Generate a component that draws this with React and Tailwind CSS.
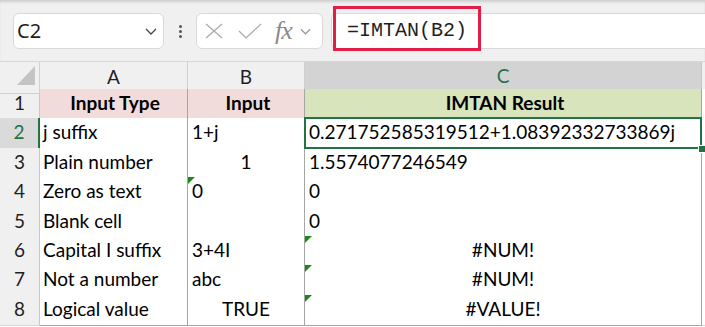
const COLS = 'grid grid-cols-[40px_148px_117px_397px_3px]';

const rows = [
  { n: 1, h: 'h-[29px]', a: 'Input Type', b: 'Input', c: 'IMTAN Result', head: true },
  { n: 2, h: 'h-[30px]', a: 'j suffix', b: '1+j', c: '0.271752585319512+1.08392332733869j', sel: true },
  { n: 3, h: 'h-[29px]', a: 'Plain number', b: '1', bCenter: true, c: '1.5574077246549' },
  { n: 4, h: 'h-[30px]', a: 'Zero as text', b: '0', bFlag: true, c: '0' },
  { n: 5, h: 'h-[29px]', a: 'Blank cell', b: '', c: '0' },
  { n: 6, h: 'h-[29px]', a: 'Capital I suffix', b: '3+4I', c: '#NUM!', cCenter: true, cFlag: true },
  { n: 7, h: 'h-[30px]', a: 'Not a number', b: 'abc', c: '#NUM!', cCenter: true, cFlag: true },
  { n: 8, h: 'h-[29px]', a: 'Logical value', b: 'TRUE', bCenter: true, c: '#VALUE!', cCenter: true, cFlag: true },
];

function Flag() {
  return (
    <span className="absolute left-0 top-0 w-0 h-0 border-t-[7px] border-r-[7px] border-t-[#1b8a1b] border-r-transparent" />
  );
}

function Chevron({ className }) {
  return (
    <svg viewBox="0 0 12 7" className={className} fill="none" stroke="currentColor" strokeWidth="1.3">
      <polyline points="1,1 6,6 11,1" />
    </svg>
  );
}

function Toolbar() {
  return (
    <div className="relative h-[61px] bg-[#f0f0f0] shadow-[inset_0_3px_3px_-1px_rgba(0,0,0,0.14)] flex items-start pt-[13px]">
      <div className="ml-[13px] w-[151px] h-[36px] bg-white rounded-[6px] border border-[#d9d9d9] flex items-center justify-between pl-[3px] pr-[6px]">
        <span className="font-['Noto_Sans',sans-serif] text-[20px] text-[#1f1f1f]">C2</span>
        <Chevron className="w-[12px] h-[7px] text-[#444]" />
      </div>
      <div className="w-[32px] h-[36px] flex flex-col items-center justify-center gap-[2px]">
        <span className="w-[3px] h-[3px] rounded-full bg-[#555]" />
        <span className="w-[3px] h-[3px] rounded-full bg-[#555]" />
        <span className="w-[3px] h-[3px] rounded-full bg-[#555]" />
      </div>
      <div className="w-[127px] h-[36px] bg-white rounded-[6px] border border-[#d9d9d9] flex items-center pl-[8px]">
        <svg viewBox="0 0 18 16" className="w-[18px] h-[16px] text-[#a8a8a8]" fill="none" stroke="currentColor" strokeWidth="1.2">
          <line x1="1" y1="1" x2="17" y2="15" />
          <line x1="17" y1="1" x2="1" y2="15" />
        </svg>
        <svg viewBox="0 0 24 16" className="ml-[15px] w-[24px] h-[16px] text-[#a8a8a8]" fill="none" stroke="currentColor" strokeWidth="1.2">
          <polyline points="1,8 8,15 23,1" />
        </svg>
        <span className="ml-[13px] font-['Liberation_Serif',serif] italic text-[26px] leading-none text-[#8a8a8a] tracking-[-1px]">fx</span>
        <Chevron className="ml-[8px] w-[11px] h-[7px] text-[#9a9a9a]" />
      </div>
      <div className="ml-[8px] flex-1 h-[36px] bg-white border-y border-l border-[#d9d9d9] rounded-l-[6px] flex items-center pl-[15px]">
        <span className="font-['Liberation_Mono',monospace] text-[20px] text-[#1f1f1f]">=IMTAN(B2)</span>
      </div>
      <div className="absolute left-[333px] top-[6px] w-[148px] h-[45px] border-[3px] border-[#e11d48]" />
    </div>
  );
}

function Sheet() {
  const hdr = "flex items-center justify-center border-r border-b border-[#d0d0d0] bg-[#f0f0f0] text-[#1f1f1f]";
  return (
    <div className="font-['Lato',sans-serif] text-[19px] text-black">
      <div className={`${COLS} h-[28px] border-t border-[#d6d6d6]`}>
        <div className="relative border-r border-b border-[#d0d0d0] bg-[#f0f0f0]">
          <svg viewBox="0 0 18 19" className="absolute left-[17px] top-[4px] w-[18px] h-[19px]">
            <polygon points="18,0 18,19 0,19" fill="#c4c4c4" />
          </svg>
        </div>
        <div className={hdr}>A</div>
        <div className={hdr}>B</div>
        <div className="flex items-center justify-center border-r border-[#c4c4c4] border-b-[3px] border-b-[#217346] bg-[#d3d3d3] text-[#217346]">C</div>
        <div className="border-b border-[#d0d0d0] bg-[#f0f0f0]" />
      </div>
      {rows.map((r) => (
        <div key={r.n} className={`${COLS} ${r.h}`}>
          <div
            className={`flex items-end justify-center pb-[1px] border-b border-[#d6d6d6] ${
              r.sel ? 'bg-[#dadada] text-[#217346] border-r-[2px] border-r-[#217346]' : 'bg-[#f0f0f0] border-r border-r-[#c8c8c8] text-[#1f1f1f]'
            }`}
          >
            {r.n}
          </div>
          <div
            className={`flex items-end pb-[1px] pl-[3px] border-r border-b border-[#a6a6a6] whitespace-nowrap ${
              r.head ? 'bg-[#f2dcdb] font-bold justify-center pl-0' : 'bg-white'
            }`}
          >
            {r.a}
          </div>
          <div
            className={`relative flex items-end pb-[1px] border-r border-b border-[#a6a6a6] whitespace-nowrap ${
              r.head ? 'bg-[#f2dcdb] font-bold justify-center' : 'bg-white'
            } ${r.bCenter ? 'justify-center' : 'pl-[4px]'}`}
          >
            {r.bFlag && <Flag />}
            {r.b}
          </div>
          <div
            className={`relative flex items-end pb-[1px] border-r border-b border-[#a6a6a6] whitespace-nowrap ${
              r.head ? 'bg-[#d8e4bc] font-bold justify-center' : 'bg-white'
            } ${r.cCenter ? 'justify-center' : 'pl-[4px]'}`}
          >
            {r.cFlag && <Flag />}
            {r.c}
            {r.sel && (
              <>
                <span className="absolute -left-[1px] -top-[1px] right-[-1px] bottom-[-1px] border-2 border-[#217346] z-10" />
                <span className="absolute right-[-5px] bottom-[-5px] w-[8px] h-[8px] bg-[#217346] border border-white z-20" />
              </>
            )}
          </div>
          <div className="bg-white border-b border-[#d6d6d6]" />
        </div>
      ))}
      <div className="h-[4px] bg-white" />
    </div>
  );
}

export default function App() {
  return (
    <div className="w-[705px] h-[327px] overflow-hidden bg-white">
      <Toolbar />
      <Sheet />
    </div>
  );
}
